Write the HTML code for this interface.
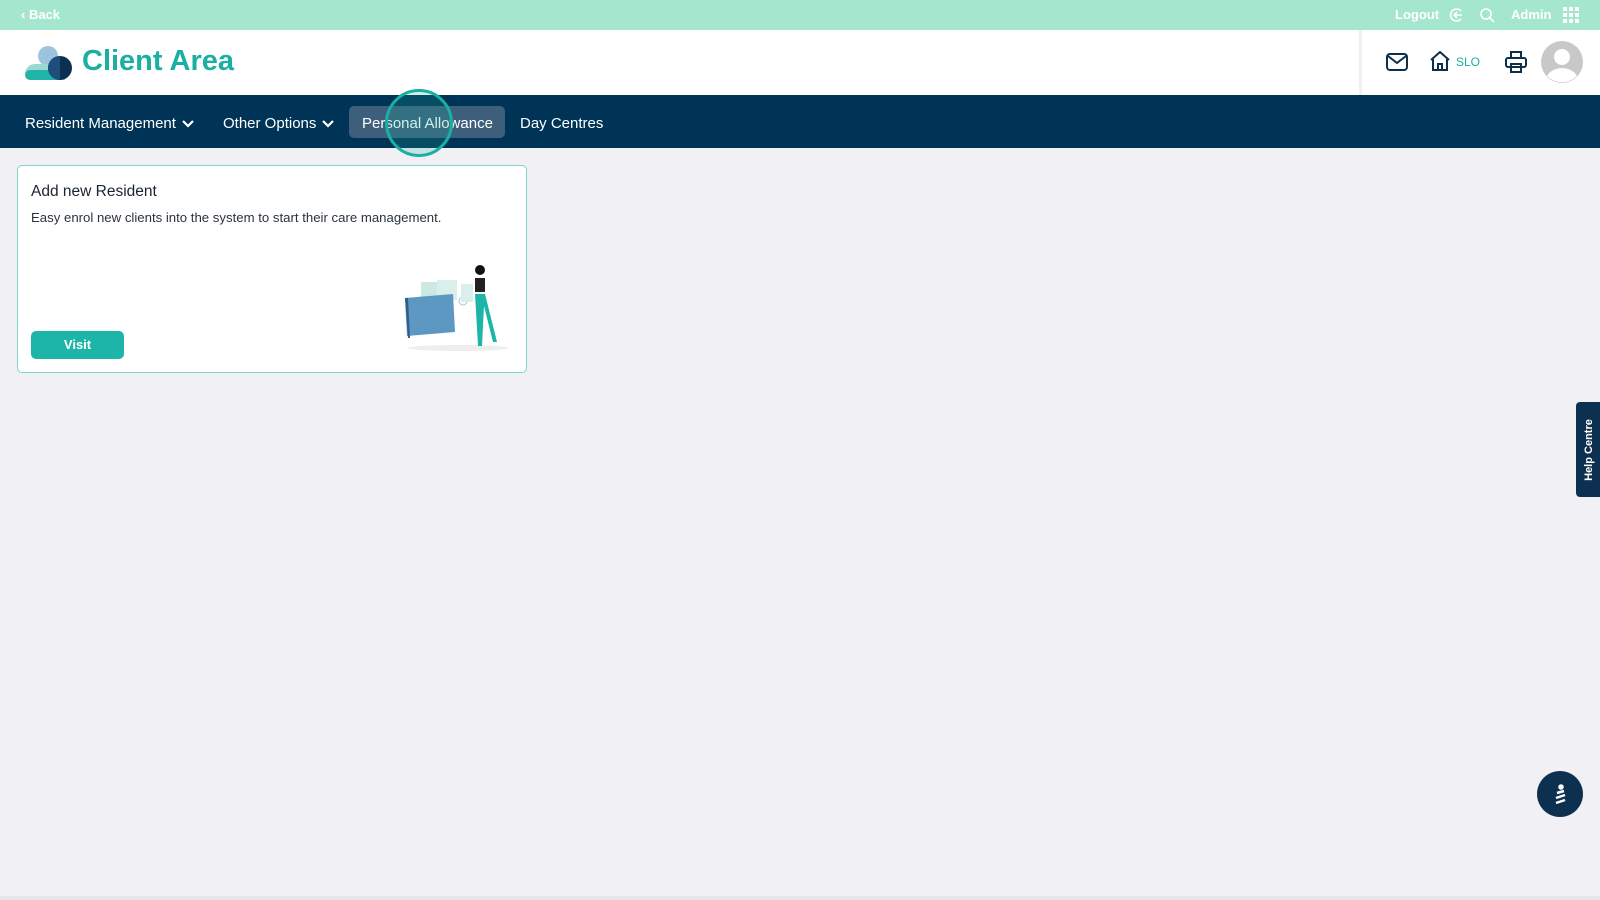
<!DOCTYPE html>
<html><head><meta charset="utf-8"><style>
*{margin:0;padding:0;box-sizing:border-box}
body{width:1600px;height:900px;background:#f0f0f5;font-family:"Liberation Sans",sans-serif;position:relative;overflow:hidden}
.top{position:absolute;left:0;top:0;width:1600px;height:30px;background:#a5e6cf;color:#fff;font-size:13px}
.hdr{position:absolute;left:0;top:30px;width:1600px;height:65px;background:#fff}
.nav{position:absolute;left:0;top:95px;width:1600px;height:53px;background:#003456;color:#fff;font-size:15px}
.nav span{position:absolute;top:20px}
.card{position:absolute;left:17px;top:165px;width:510px;height:208px;background:#fff;border:1.5px solid #7fd3c9;border-radius:5px}
.chev{display:inline-block;vertical-align:middle;margin-left:6px}
</style></head><body>
<div class="top">
<span style="position:absolute;left:21px;top:7px;font-weight:bold">‹ Back</span>
<span style="position:absolute;left:1395px;top:7px;font-weight:bold">Logout</span>
<svg style="position:absolute;left:1448px;top:7px" width="16" height="16" viewBox="0 0 16 16" fill="none" stroke="#fff" stroke-width="1.6"><path d="M13 4A6 6 0 1 0 13 12"/><path d="M14 8H6M9 5L6 8L9 11"/></svg>
<svg style="position:absolute;left:1479px;top:7px" width="16" height="16" viewBox="0 0 16 16" fill="none" stroke="#fff" stroke-width="1.6"><circle cx="7" cy="7" r="5"/><path d="M11 11L15 15"/></svg>
<span style="position:absolute;left:1511px;top:7px;font-weight:bold">Admin</span>
<svg style="position:absolute;left:1563px;top:7px" width="16" height="16" viewBox="0 0 16 16" fill="#fff"><rect x="0" y="0" width="4" height="4"/><rect x="6" y="0" width="4" height="4"/><rect x="12" y="0" width="4" height="4"/><rect x="0" y="6" width="4" height="4"/><rect x="6" y="6" width="4" height="4"/><rect x="12" y="6" width="4" height="4"/><rect x="0" y="12" width="4" height="4"/><rect x="6" y="12" width="4" height="4"/><rect x="12" y="12" width="4" height="4"/></svg>
</div>
<div class="hdr">
<svg style="position:absolute;left:24px;top:14px" width="50" height="38" viewBox="0 0 50 38"><circle cx="24" cy="12" r="10" fill="#9ec3dd"/><path d="M1 30a10 10 0 0 1 10-10h30v16H8a7 7 0 0 1-7-6z" fill="#9bd8d2"/><rect x="1" y="26" width="40" height="10" rx="5" fill="#1fb5a8"/><circle cx="36" cy="24" r="12" fill="#0e3050"/><path d="M36 12a12 12 0 0 0 0 24z" fill="#1d4f7a"/></svg>
<span style="position:absolute;left:82px;top:15px;font-size:29px;font-weight:bold;color:#1aafa2">Client Area</span>
<div style="position:absolute;left:1359px;top:0;width:3px;height:65px;background:#eef0f3"></div>
<svg style="position:absolute;left:1386px;top:23px" width="22" height="18" viewBox="0 0 22 18" fill="none" stroke="#0e2f4a" stroke-width="2"><rect x="1" y="1" width="20" height="16" rx="3"/><path d="M2 3l9 7 9-7"/></svg>
<svg style="position:absolute;left:1429px;top:21px" width="22" height="20" viewBox="0 0 22 20" fill="none" stroke="#0e2f4a" stroke-width="2"><path d="M2 9L11 1l9 8M4 8v11h14V8M9 19v-6h4v6"/></svg>
<span style="position:absolute;left:1456px;top:25px;font-size:12px;color:#1aafa2">SLO</span>
<svg style="position:absolute;left:1505px;top:21px" width="22" height="22" viewBox="0 0 22 22" fill="none" stroke="#0e2f4a" stroke-width="2"><rect x="6" y="1" width="10" height="6"/><rect x="1" y="7" width="20" height="9" rx="2"/><rect x="6" y="13" width="10" height="8"/></svg>
<svg style="position:absolute;left:1541px;top:11px" width="42" height="42" viewBox="0 0 42 42"><circle cx="21" cy="21" r="21" fill="#c8c8c8"/><circle cx="21" cy="16" r="8" fill="#fff"/><path d="M6 35a16 12 0 0 1 30 0a21 21 0 0 1-30 0z" fill="#fff"/></svg>
</div>
<div class="nav">
<span style="left:25px">Resident Management<svg class="chev" width="12" height="8" viewBox="0 0 12 8" fill="none" stroke="#fff" stroke-width="2.2"><path d="M1 1l5 5 5-5"/></svg></span>
<span style="left:223px">Other Options<svg class="chev" width="12" height="8" viewBox="0 0 12 8" fill="none" stroke="#fff" stroke-width="2.2"><path d="M1 1l5 5 5-5"/></svg></span>
<div style="position:absolute;left:349px;top:11px;width:156px;height:32px;background:#3d5f7b;border-radius:5px"></div>
<span style="left:362px">Personal Allowance</span>
<span style="left:520px">Day Centres</span>
<div style="position:absolute;left:385px;top:-6px;width:68px;height:68px;border:3px solid #1aafa2;border-radius:50%;background:rgba(26,175,162,0.2)"></div>
</div>
<div class="card">
<div style="position:absolute;left:13px;top:17px;font-size:15.5px;color:#1b2433">Add new Resident</div>
<div style="position:absolute;left:13px;top:44px;font-size:13.2px;color:#2a3340">Easy enrol new clients into the system to start their care management.</div>
<div style="position:absolute;left:13px;top:165px;width:93px;height:28px;background:#1eb5a9;border-radius:5px;color:#fff;font-weight:bold;font-size:13px;text-align:center;line-height:28px">Visit</div>
<svg style="position:absolute;left:385px;top:98px" width="110" height="90" viewBox="0 0 110 90"><ellipse cx="55" cy="84" rx="50" ry="3" fill="#eee"/><rect x="18" y="18" width="22" height="18" fill="#cde9e4"/><rect x="34" y="16" width="20" height="20" fill="#d9efeb"/><path d="M2 34l48-4 2 38-48 4z" fill="#5d98c2"/><path d="M2 34l3 40 2 0-2-40z" fill="#2f5f88"/><circle cx="60" cy="37" r="4" fill="none" stroke="#9cc" /><rect x="58" y="20" width="12" height="18" fill="#d9efeb"/><circle cx="77" cy="6" r="5" fill="#111"/><rect x="72" y="14" width="10" height="14" fill="#222"/><path d="M72 30l10 0 12 48-4 0-9-36-2 40-4 0z" fill="#1eb5a9"/></svg>
</div>
<div style="position:absolute;left:1576px;top:402px;width:26px;height:95px;background:#0e3050;border-radius:4px 0 0 4px"><span style="position:absolute;left:50%;top:50%;transform:translate(-50%,-50%) rotate(-90deg);white-space:nowrap;color:#fff;font-size:11px;font-weight:bold">Help Centre</span></div>
<div style="position:absolute;left:1537px;top:771px;width:46px;height:46px;border-radius:50%;background:#0e3050"><svg width="46" height="46" viewBox="0 0 46 46" fill="none" stroke="#fff" stroke-width="2.5"><path d="M19 32l9-3M19 27l9-3M20 22l7-2"/><circle cx="24" cy="16" r="1.5" fill="#fff"/></svg></div>
<div style="position:absolute;left:0;top:896px;width:1600px;height:4px;background:#e6e6ea"></div>
</body></html>
